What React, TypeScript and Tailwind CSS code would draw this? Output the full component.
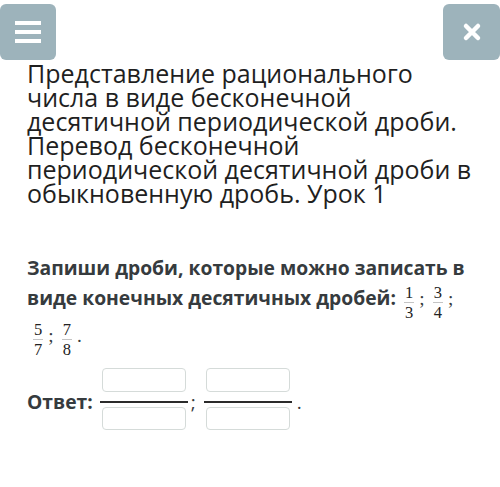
import React from "react";

function Frac({ n, d }: { n: string; d: string }) {
  return (
    <span className="inline-block align-[-13px] ml-[3px] mr-[5px] text-center font-['Liberation_Serif',serif] font-normal text-[16.5px] text-[#222]">
      <span className="block leading-[15px] px-[1px]">{n}</span>
      <span className="block h-px bg-[#c4c4c4] my-[2px]" />
      <span className="block leading-[15px] px-[1px]">{d}</span>
    </span>
  );
}

function AnswerFrac() {
  return (
    <div className="flex flex-col items-center w-[88px]">
      <div className="w-[84px] h-[24px] rounded-[4px] border border-[#d5dbd9] bg-white" />
      <div className="w-[88px] h-[2px] bg-[#2b2b2b] mt-[9px] mb-[4px]" />
      <div className="w-[84px] h-[23px] rounded-[4px] border border-[#d5dbd9] bg-white" />
    </div>
  );
}

export default function App() {
  return (
    <div className="w-[500px] h-[487px] bg-white overflow-hidden font-['Open_Sans',sans-serif]">
      <div className="flex justify-between pt-[4px]">
        <button className="w-[56px] h-[56px] rounded-[6px] bg-[#9db3bb] flex flex-col items-center justify-center gap-[5px]">
          <span className="block w-[26px] h-[4px] bg-white" />
          <span className="block w-[26px] h-[4px] bg-white" />
          <span className="block w-[26px] h-[4px] bg-white" />
        </button>
        <button className="w-[57px] h-[56px] rounded-[6px] bg-[#9db3bb] flex items-center justify-center">
          <svg width="20" height="20" viewBox="0 0 20 20">
            <path d="M4 4 L16 16 M16 4 L4 16" stroke="white" strokeWidth="4.5" strokeLinecap="round" />
          </svg>
        </button>
      </div>

      <h1 className="mt-[1px] pl-[27px] text-[25px] leading-[24px] font-normal text-[#1f1f1f]">
        Представление рационального
        <br />
        числа в виде бесконечной
        <br />
        десятичной периодической дроби.
        <br />
        Перевод бесконечной
        <br />
        периодической десятичной дроби в
        <br />
        обыкновенную дробь. Урок 1
      </h1>

      <p className="mt-[48px] pl-[27px] text-[19.3px] leading-[30px] font-bold text-[#363b3e]">
        Запиши дроби, которые можно записать в
        <br />
        виде конечных десятичных дробей:{" "}
        <Frac n="1" d="3" />
        <span className="font-['Liberation_Serif',serif] font-normal">;</span>{" "}
        <Frac n="3" d="4" />
        <span className="font-['Liberation_Serif',serif] font-normal">;</span>
        <br />
        <span className="inline-block w-[3px]" />
        <Frac n="5" d="7" />
        <span className="font-['Liberation_Serif',serif] font-normal">;</span>{" "}
        <Frac n="7" d="8" />
        <span className="font-['Liberation_Serif',serif] font-normal">.</span>
      </p>

      <div className="mt-[11px] pl-[27px] flex items-center">
        <span className="text-[19.3px] leading-[24px] font-bold text-[#363b3e] mt-[6px] mr-[7px]">Ответ:</span>
        <AnswerFrac />
        <span className="text-[19px] leading-[24px] text-[#363b3e] mt-[6px] ml-[3px] mr-[8px]">;</span>
        <AnswerFrac />
        <span className="text-[19px] leading-[24px] text-[#363b3e] mt-[6px] ml-[5px]">.</span>
      </div>
    </div>
  );
}
